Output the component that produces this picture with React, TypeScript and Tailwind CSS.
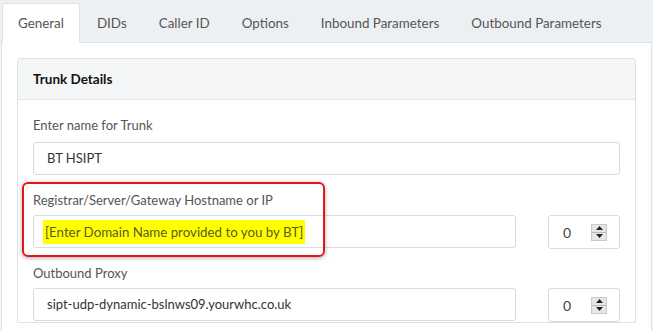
import React from "react";

const tabs = ["General", "DIDs", "Caller ID", "Options", "Inbound Parameters", "Outbound Parameters"];

function Spinner() {
    return (
        <div className="w-[72px] h-[34px] border border-[#d2dde0] rounded-[3px] bg-white flex items-center pl-[14px] pr-[12px]">
            <span className="flex-1 text-[14px] text-[#444]">0</span>
            <div className="w-[16px] h-[17px] flex flex-col bg-[#e6e6e6] border border-[#c9c9c9]">
                <div className="flex-1 flex items-center justify-center border-b border-[#b8b8b8]">
                    <svg width="7" height="4" viewBox="0 0 7 4"><path d="M0 4L3.5 0L7 4Z" fill="#222" /></svg>
                </div>
                <div className="flex-1 flex items-center justify-center">
                    <svg width="7" height="4" viewBox="0 0 7 4"><path d="M0 0L3.5 4L7 0Z" fill="#222" /></svg>
                </div>
            </div>
        </div>
    );
}

export default function App() {
    return (
        <div className="relative w-[653px] h-[331px] overflow-hidden bg-[#f4f5f6] font-['Lato',sans-serif] text-[13px]">
            {/* Tabs */}
            <div className="flex h-[43px] bg-[#edf0f2] pl-[2px] pt-[3px] border-b border-[#dde2e5] text-[13.4px]">
                {tabs.map((t, i) => (
                    <div
                        key={t}
                        className={
                            i === 0
                                ? "h-[40px] -mb-px px-[15px] mr-[2px] flex items-center bg-white border border-b-0 border-[#dde2e5] rounded-t-[3px] text-[#555]"
                                : "h-[40px] px-[15px] mr-[2px] flex items-center text-[#555]"
                        }
                    >
                        {t}
                    </div>
                ))}
            </div>

            {/* Content */}
            <div className="mx-px h-[300px] bg-white border-x border-[#dde2e5] pl-[15px] pr-[15px] pt-[15px]">
                <div className="border border-[#dde2e5] rounded-t-[3px]">
                    <div className="h-[41px] bg-[#f5f6f7] border-b border-[#e3e7e9] px-[15px] flex items-center font-bold text-[13.5px] text-[#111]">
                        Trunk Details
                    </div>
                    <div className="px-[15px] pt-[15px]">
                        <div className="mb-[15px]">
                            <div className="text-[#555] leading-[20px] mb-[7px]">Enter name for Trunk</div>
                            <div className="h-[33px] border border-[#d2dde0] rounded-[3px] px-[13px] flex items-center text-[#333]">
                                BT HSIPT
                            </div>
                        </div>
                        <div className="mb-[14px]">
                            <div className="text-[#555] leading-[20px] mb-[5px]">Registrar/Server/Gateway Hostname or IP</div>
                            <div className="flex gap-[32px]">
                                <div className="flex-1 h-[33px] border border-[#d2dde0] rounded-[3px] px-[9px] flex items-center">
                                    <span className="bg-[#ffff00] text-[#5b5b22] px-[2px] leading-[24px] text-[13.3px]">
                                        [Enter Domain Name provided to you by BT]
                                    </span>
                                </div>
                                <Spinner />
                            </div>
                        </div>
                        <div>
                            <div className="text-[#555] leading-[20px] mb-[5px]">Outbound Proxy</div>
                            <div className="flex gap-[32px]">
                                <div className="flex-1 h-[33px] border border-[#d2dde0] rounded-[3px] px-[13px] flex items-center text-[#333]">
                                    sipt-udp-dynamic-bslnws09.yourwhc.co.uk
                                </div>
                                <Spinner />
                            </div>
                        </div>
                    </div>
                </div>
            </div>

            {/* Annotation */}
            <div className="absolute left-[22px] top-[182px] w-[303px] h-[75px] border-2 border-[#e8141c] rounded-[6px] shadow-[0_1px_4px_rgba(0,0,0,0.35)]" />
        </div>
    );
}
